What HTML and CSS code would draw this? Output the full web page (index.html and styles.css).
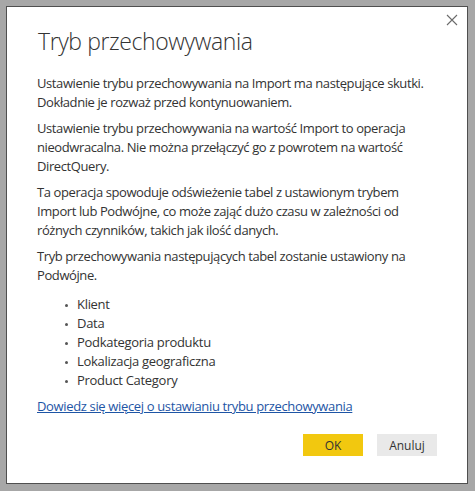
FILE: index.html
```html
<!DOCTYPE html>
<html lang="pl">
<head>
<meta charset="utf-8">
<link rel="stylesheet" href="styles.css">
</head>
<body>
<div class="frame">
  <div class="dialog">
    <button class="close" aria-label="Zamknij">
      <svg width="12" height="12" viewBox="0 0 12 12"><path d="M1 1L11 11M11 1L1 11" stroke="#6b6b6b" stroke-width="1.1" fill="none"/></svg>
    </button>
    <h1 class="title">Tryb przechowywania</h1>
    <p class="para">Ustawienie trybu przechowywania na Import ma następujące skutki.<br>Dokładnie je rozważ przed kontynuowaniem.</p>
    <p class="para">Ustawienie trybu przechowywania na wartość Import to operacja<br>nieodwracalna. Nie można przełączyć go z powrotem na wartość<br>DirectQuery.</p>
    <p class="para">Ta operacja spowoduje odświeżenie tabel z ustawionym trybem<br>Import lub Podwójne, co może zająć dużo czasu w zależności od<br>różnych czynników, takich jak ilość danych.</p>
    <p class="para">Tryb przechowywania następujących tabel zostanie ustawiony na<br>Podwójne.</p>
    <ul class="tables">
      <li>Klient</li>
      <li>Data</li>
      <li>Podkategoria produktu</li>
      <li>Lokalizacja geograficzna</li>
      <li>Product Category</li>
    </ul>
    <a class="link" href="#">Dowiedz się więcej o ustawianiu trybu przechowywania</a>
    <div class="actions">
      <button class="btn btn-primary">OK</button>
      <button class="btn btn-secondary">Anuluj</button>
    </div>
  </div>
</div>
</body>
</html>
```

FILE: styles.css
```css
html, body {
  margin: 0;
  padding: 0;
  background: #a7a7a7;
}
body {
  width: 475px;
  height: 491px;
  font-family: "Open Sans", "Noto Sans", sans-serif;
  color: #333333;
}
.frame {
  padding: 6px 7px 7px 6px;
  height: 491px;
  box-sizing: border-box;
}
.dialog {
  position: relative;
  background: #ffffff;
  border: 1px solid #4f4f4f;
  height: 100%;
  box-sizing: border-box;
  padding: 19px 30px 0 30px;
}
.close {
  position: absolute;
  top: 3px;
  right: 5px;
  width: 20px;
  height: 20px;
  padding: 0;
  border: none;
  background: transparent;
  display: flex;
  align-items: center;
  justify-content: center;
}
.title {
  margin: 0 0 18px 1px;
  font-weight: 300;
  font-size: 23px;
  line-height: 30px;
  letter-spacing: -0.4px;
  color: #333333;
}
.para {
  margin: 0 0 7px 0;
  font-size: 13px;
  line-height: 19px;
  letter-spacing: -0.4px;
  white-space: nowrap;
}
.tables {
  list-style: none;
  margin: 10px 0 7px 0;
  padding: 0 0 0 40px;
  font-size: 13px;
  line-height: 19px;
  letter-spacing: -0.3px;
}
.tables li {
  position: relative;
}
.tables li::before {
  content: "";
  position: absolute;
  left: -12px;
  top: 9px;
  width: 3px;
  height: 3px;
  border-radius: 50%;
  background: #555555;
}
.link {
  display: block;
  font-size: 13px;
  line-height: 19px;
  letter-spacing: -0.35px;
  color: #1e55a5;
  text-decoration: underline;
}
.actions {
  display: flex;
  justify-content: flex-end;
  gap: 14px;
  margin-top: 18px;
}
.btn {
  width: 60px;
  height: 22px;
  border: none;
  padding: 0;
  font-family: "Open Sans", "Noto Sans", sans-serif;
  font-size: 12px;
  color: #333333;
}
.btn-primary {
  background: #f2c80f;
}
.btn-secondary {
  background: #e9e9e9;
}
```
